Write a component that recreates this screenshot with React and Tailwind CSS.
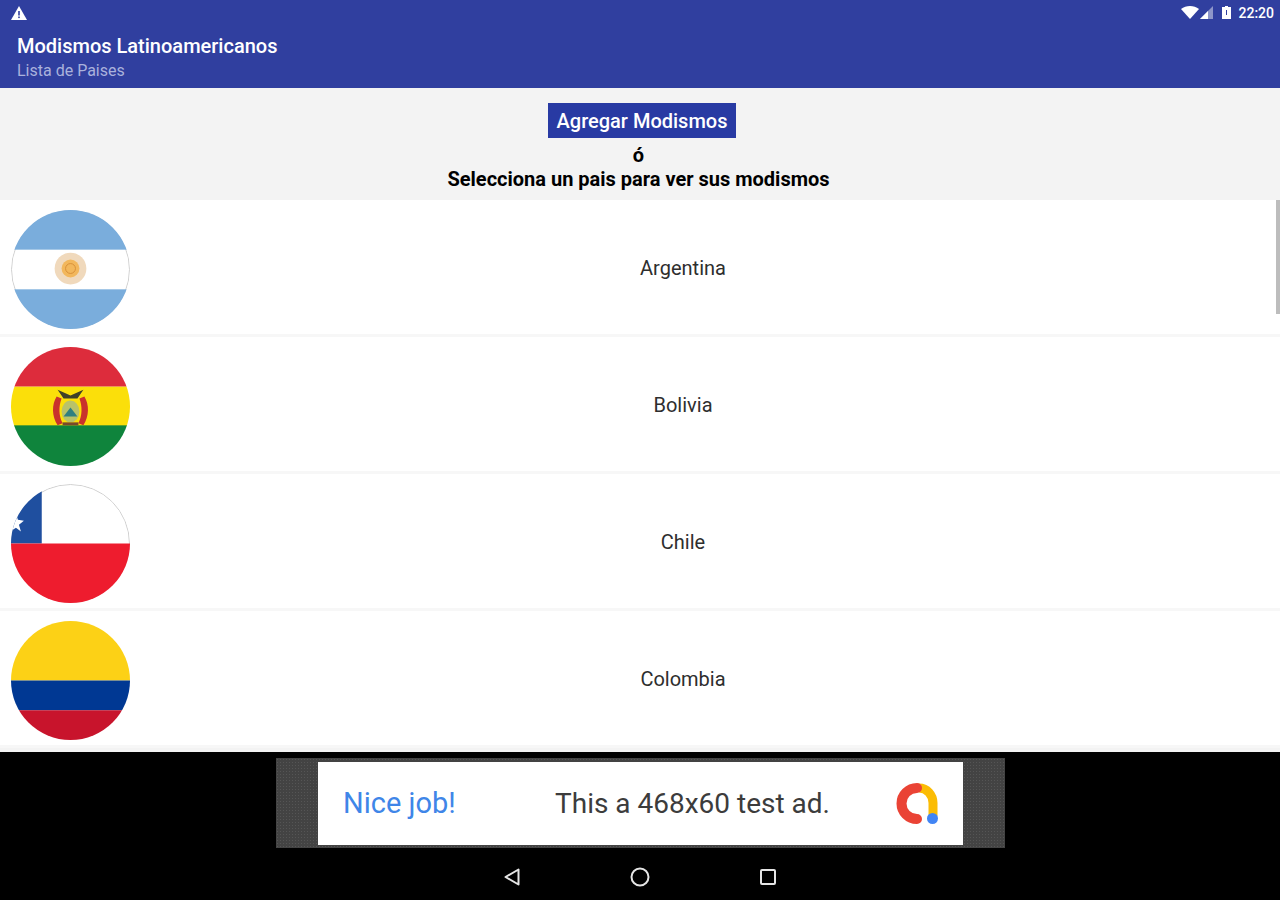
import React from 'react';

const FlagEdge = () => (
  <circle cx="60" cy="60" r="59.5" fill="none" stroke="#cfcfcf" strokeWidth="1" />
);

const ArgentinaFlag = () => (
  <svg viewBox="0 0 120 120" className="w-full h-full">
    <rect width="120" height="120" fill="#ffffff" />
    <FlagEdge />
    <rect width="120" height="40" fill="#7aaddc" />
    <rect y="80" width="120" height="40" fill="#7aaddc" />
    <circle cx="60" cy="59" r="16" fill="#f0d9bc" />
    <circle cx="60" cy="59" r="9" fill="#f2b75c" />
    <circle cx="60" cy="59" r="5" fill="none" stroke="#d9913a" strokeWidth="1" />
  </svg>
);

const BoliviaFlag = () => (
  <svg viewBox="0 0 120 120" className="w-full h-full">
    <rect width="120" height="40" fill="#dd2c3c" />
    <rect y="40" width="120" height="40" fill="#fbdf0a" />
    <rect y="79" width="120" height="41" fill="#0f843c" />
    <path d="M46 50c-5 8-5 20 1 29l5-2c-4-8-4-17-1-25z" fill="#c9322c" />
    <path d="M74 50c5 8 5 20-1 29l-5-2c4-8 4-17 1-25z" fill="#c9322c" />
    <path d="M47 43l13 6 13-6-6 9H53z" fill="#3f4028" />
    <ellipse cx="60" cy="65" rx="9" ry="11" fill="#b9c26a" />
    <path d="M53 70l7-9 7 9z" fill="#2f7f80" />
    <rect x="52" y="76" width="16" height="3" fill="#7a4a2a" />
  </svg>
);

const ChileFlag = () => (
  <svg viewBox="0 0 120 120" className="w-full h-full">
    <rect width="120" height="60" fill="#ffffff" />
    <FlagEdge />
    <rect width="31" height="60" fill="#1f4f9f" />
    <rect y="60" width="120" height="60" fill="#ee1c2e" />
    <path d="M5 30l2 6 6 1-5 4 2 7-5-4-6 4 2-7-5-4 6-1z" fill="#ffffff" />
  </svg>
);

const ColombiaFlag = () => (
  <svg viewBox="0 0 120 120" className="w-full h-full">
    <rect width="120" height="60" fill="#fcd116" />
    <rect y="60" width="120" height="30" fill="#003893" />
    <rect y="90" width="120" height="30" fill="#c8142c" />
  </svg>
);

const countries = [
  { name: 'Argentina', Flag: ArgentinaFlag },
  { name: 'Bolivia', Flag: BoliviaFlag },
  { name: 'Chile', Flag: ChileFlag },
  { name: 'Colombia', Flag: ColombiaFlag },
];

const StatusBar = () => (
  <div className="h-[25px] flex items-center justify-between pl-[11px] pr-[6px]">
    <svg viewBox="0 0 16 14" className="w-4 h-[14px]">
      <path d="M8 0l8 14H0z" fill="#ffffff" />
      <rect x="7.2" y="5" width="1.6" height="4.5" fill="#303f9f" />
      <rect x="7.2" y="10.5" width="1.6" height="1.6" fill="#303f9f" />
    </svg>
    <div className="flex items-center text-white">
      <svg viewBox="0 0 18 13" className="w-[18px] h-[13px]">
        <path d="M0 3c5-4 13-4 18 0l-9 10z" fill="#ffffff" />
      </svg>
      <svg viewBox="0 0 13 13" className="w-[13px] h-[13px] ml-[1px]">
        <path d="M13 0v13H0z" fill="#8d96c9" />
        <path d="M8 5v8H0z" fill="#ffffff" />
      </svg>
      <svg viewBox="0 0 9 13" className="w-[9px] h-[13px] ml-[9px]">
        <path d="M3 0h3v1h3v12H0V1h3z" fill="#ffffff" />
        <rect x="4" y="4" width="1" height="5" fill="#303f9f" />
      </svg>
      <span className="ml-[7px] text-[14px] leading-none font-medium">22:20</span>
    </div>
  </div>
);

const AdLogo = () => (
  <svg viewBox="0 0 43 41" className="w-[43px] h-[41px]">
    <path d="M24 5C32 5 38 12 38 20V33" fill="none" stroke="#fbbc04" strokeWidth="9" />
    <path d="M22 5a15 15 0 1 0 0 31" fill="none" stroke="#ea4335" strokeWidth="10" strokeLinecap="round" />
    <circle cx="37.5" cy="35.5" r="5.5" fill="#4285f4" />
  </svg>
);

const NavBar = () => (
  <div className="flex-1 flex items-center justify-center gap-[109px] pt-[6px]">
    <svg viewBox="0 0 18 20" className="w-[18px] h-5">
      <path d="M15.5 2.5v15L2.5 10z" fill="none" stroke="#e5e5e5" strokeWidth="2" strokeLinejoin="round" />
    </svg>
    <svg viewBox="0 0 20 20" className="w-5 h-5">
      <circle cx="10" cy="10" r="8.5" fill="none" stroke="#e5e5e5" strokeWidth="2" />
    </svg>
    <svg viewBox="0 0 18 18" className="w-[18px] h-[18px]">
      <rect x="2" y="2" width="14" height="14" rx="1" fill="none" stroke="#e5e5e5" strokeWidth="2" />
    </svg>
  </div>
);

const App = () => {
  return (
    <div className="w-[1280px] h-[900px] flex flex-col overflow-hidden bg-[#f3f3f3] font-['Roboto',sans-serif]">
      <header className="h-[88px] shrink-0 bg-[#303f9f]">
        <StatusBar />
        <div className="pl-[17px] pt-[9px]">
          <div className="text-[20px] leading-[24px] font-medium text-white">Modismos Latinoamericanos</div>
          <div className="mt-[1px] text-[16px] leading-[24px] text-[#aab2dc]">Lista de Paises</div>
        </div>
      </header>

      <div className="h-[112px] shrink-0 flex flex-col items-center pt-[15px]">
        <button className="ml-[4px] w-[188px] h-[35px] pt-[1px] bg-[#283aa3] text-white text-[20px] font-medium leading-none">
          Agregar Modismos
        </button>
        <div className="mt-[5px] mr-[3px] text-[20px] leading-[24px] font-bold text-black">ó</div>
        <div className="text-[20px] leading-[24px] font-bold text-black mr-[3px]">Selecciona un pais para ver sus modismos</div>
      </div>

      <div className="relative flex-1 min-h-0 overflow-hidden">
        {countries.map(({ name, Flag }) => (
          <div key={name} className="h-[137px] border-b-[3px] border-[#f7f7f7] bg-white flex items-start pl-[11px] pt-[10px]">
            <div className="w-[119px] h-[119px] shrink-0 rounded-full overflow-hidden">
              <Flag />
            </div>
            <div className="flex-1 h-[116px] flex items-center justify-center pr-[44px] text-[20px] text-[#2e2e2e]">
              {name}
            </div>
          </div>
        ))}
        <div className="absolute top-0 right-0 w-[4px] h-[114px] bg-[#bdbdbd]" />
      </div>

      <footer className="h-[148px] shrink-0 bg-black flex flex-col items-center">
        <div className="mt-[6px] w-[729px] h-[90px] bg-[#434343] bg-[radial-gradient(#555555_1px,transparent_1px)] bg-[length:3px_3px] px-[42px] pt-[4px] pb-[3px] shrink-0 ml-[1px]">
          <div className="h-full bg-white flex items-center pl-[25px] pr-[25px]">
            <span className="w-[212px] text-[29px] text-[#3f86e8]">Nice job!</span>
            <span className="flex-1 text-[28px] text-[#3c3c3c]">This a 468x60 test ad.</span>
            <AdLogo />
          </div>
        </div>
        <NavBar />
      </footer>
    </div>
  );
};

export default App;
